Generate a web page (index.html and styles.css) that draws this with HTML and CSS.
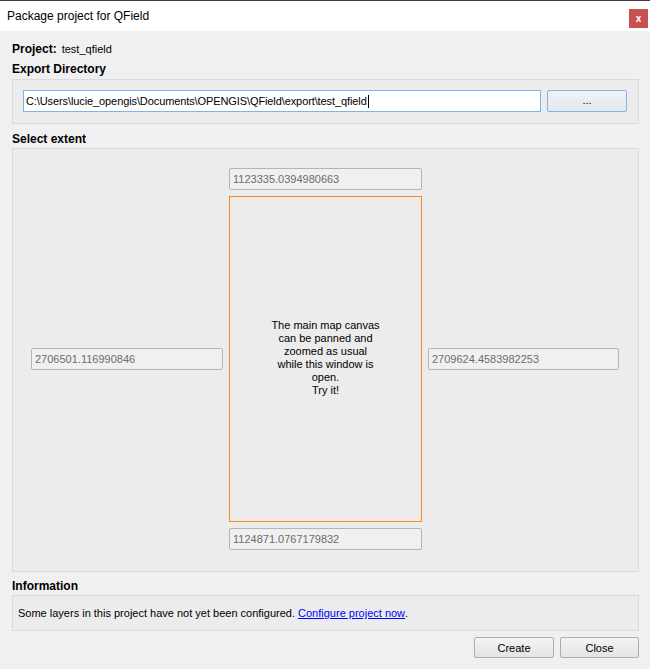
FILE: index.html
```html
<!DOCTYPE html>
<html>
<head>
<meta charset="utf-8">
<link rel="stylesheet" href="styles.css">
</head>
<body>
<div class="window">
  <div class="titlebar">
    <span class="title">Package project for QField</span>
    <span class="close">x</span>
  </div>
  <div class="content">
    <div class="line project"><b>Project:</b><span class="pname">test_qfield</span></div>
    <div class="line heading h-export">Export Directory</div>
    <div class="group export">
      <div class="input focused">C:\Users\lucie_opengis\Documents\OPENGIS\QField\export\test_qfield<span class="caret"></span></div>
      <div class="btn browse">...</div>
    </div>
    <div class="line heading h-extent">Select extent</div>
    <div class="group extent">
      <div class="extent-grid">
        <div class="einput top">1123335.0394980663</div>
        <div class="einput left">2706501.116990846</div>
        <div class="canvas">The main map canvas<br>can be panned and<br>zoomed as usual<br>while this window is<br>open.<br>Try it!</div>
        <div class="einput right">2709624.4583982253</div>
        <div class="einput bottom">1124871.0767179832</div>
      </div>
    </div>
    <div class="line heading h-info">Information</div>
    <div class="group info">Some layers in this project have not yet been configured.&nbsp;<a class="link" href="#">Configure project now</a>.</div>
    <div class="buttons">
      <div class="btn action create">Create</div>
      <div class="btn action closebtn">Close</div>
    </div>
  </div>
</div>
</body>
</html>
```
FILE: styles.css
```css
html, body {
  margin: 0;
  padding: 0;
}
body {
  width: 650px;
  height: 669px;
  background: #f0f0f0;
  font-family: "Liberation Sans", Arial, sans-serif;
  font-size: 11px;
  color: #000;
  overflow: hidden;
}
.window {
  width: 650px;
  height: 669px;
  background: #f0f0f0;
}
.titlebar {
  height: 30px;
  border-top: 1px solid #3a3a3a;
  background: #ffffff;
  display: flex;
  align-items: center;
  justify-content: space-between;
  padding: 0 1px 0 7px;
}
.title {
  font-family: "Liberation Sans", Arial, sans-serif;
  font-size: 12px;
  color: #000;
  margin-top: -1px;
}
.close {
  width: 19px;
  height: 19px;
  background: #c75050;
  color: #fff;
  font-weight: bold;
  font-size: 10px;
  display: flex;
  align-items: center;
  justify-content: center;
  margin-top: 4px;
  margin-right: 1px;
}
.content {
  padding: 0 11px 0 12px;
}
.line {
  height: 14px;
  line-height: 14px;
  white-space: nowrap;
}
.project {
  margin-top: 11px;
}
.project b {
  font-weight: bold;
  font-size: 12px;
}
.pname {
  margin-left: 5px;
}
.heading {
  font-weight: bold;
  font-size: 12px;
}
.h-export {
  margin-top: 6px;
}
.group {
  border: 1px solid #dadada;
  background: #ececec;
  box-sizing: border-box;
}
.export {
  margin-top: 3px;
  height: 45px;
  display: flex;
  align-items: flex-start;
  padding: 10px 11px 0 10px;
  gap: 6px;
}
.input {
  flex: 1;
  height: 22px;
  box-sizing: border-box;
  border: 1px solid #7eb4ea;
  background: #fff;
  padding-left: 2px;
  display: flex;
  align-items: center;
  white-space: nowrap;
  overflow: hidden;
  letter-spacing: -0.1px;
}
.caret {
  display: inline-block;
  width: 1px;
  height: 13px;
  background: #000;
  margin-left: 1px;
}
.btn {
  box-sizing: border-box;
  display: flex;
  align-items: center;
  justify-content: center;
  border-radius: 2px;
}
.browse {
  width: 80px;
  height: 22px;
  border: 1px solid #7eb4ea;
  background: linear-gradient(#f0f3f7, #e3e8ee);
  padding-bottom: 3px;
}
.h-extent {
  margin-top: 8px;
}
.extent {
  margin-top: 2px;
  height: 424px;
  padding: 19px 19px 0 18px;
}
.extent-grid {
  display: grid;
  grid-template-columns: 192px 193px 191px;
  grid-template-rows: 22px 326px 22px;
  column-gap: 6px;
  row-gap: 6px;
}
.einput {
  height: 22px;
  box-sizing: border-box;
  border: 1px solid #b4b4b4;
  border-radius: 2px;
  background: #f0f0f0;
  color: #6d6d6d;
  padding-left: 3px;
  display: flex;
  align-items: center;
  white-space: nowrap;
}
.top {
  grid-column: 2;
  grid-row: 1;
}
.left {
  grid-column: 1;
  grid-row: 2;
  align-self: center;
}
.canvas {
  grid-column: 2;
  grid-row: 2;
  border: 1px solid #f28a1e;
  box-sizing: border-box;
  display: flex;
  align-items: center;
  justify-content: center;
  text-align: center;
  line-height: 13px;
  color: #000;
  padding-bottom: 3px;
}
.right {
  grid-column: 3;
  grid-row: 2;
  align-self: center;
}
.bottom {
  grid-column: 2;
  grid-row: 3;
}
.h-info {
  margin-top: 7px;
}
.info {
  margin-top: 2px;
  height: 36px;
  display: flex;
  align-items: center;
  padding-left: 5px;
  white-space: nowrap;
}
.link {
  color: #0000ff;
  text-decoration: underline;
}
.buttons {
  margin-top: 6px;
  display: flex;
  justify-content: flex-end;
  gap: 6px;
}
.action {
  height: 21px;
  border: 1px solid #adadad;
  background: linear-gradient(#f4f4f4, #e4e4e4);
}
.create {
  width: 80px;
}
.closebtn {
  width: 79px;
}
```
